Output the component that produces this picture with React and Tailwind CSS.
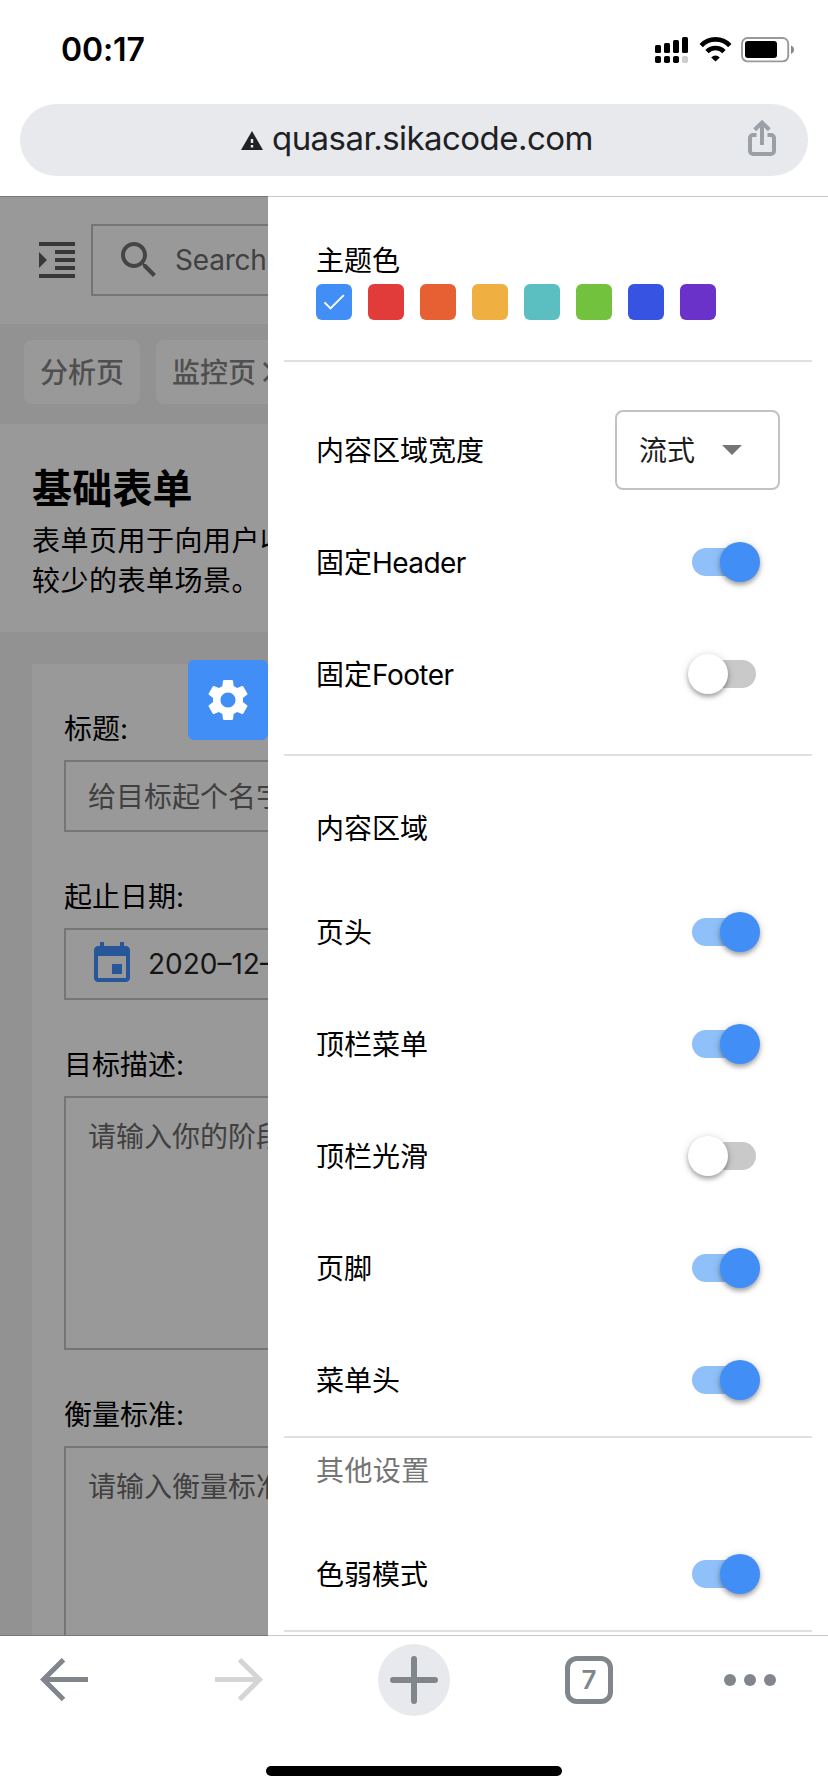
const SWATCHES = [
  'bg-[#428ef7]', 'bg-[#e13c39]', 'bg-[#e66033]', 'bg-[#efaf41]',
  'bg-[#5bbfc1]', 'bg-[#73c23d]', 'bg-[#3653e2]', 'bg-[#6a32c9]',
];

function StatusBar() {
  return (
    <div className="flex h-[104px] shrink-0 justify-between pl-[61px] pr-[34px]">
      <div className="pt-[30px] text-[32px] leading-[40px] font-semibold tracking-[-0.1px] text-black">00:17</div>
      <svg className="mt-[37px] h-[27px] w-[140px]" viewBox="0 0 140 27">
        <rect x="1" y="8" width="6" height="8" rx="1.5" />
        <rect x="10" y="6" width="6" height="10" rx="1.5" />
        <rect x="19" y="3" width="6" height="13" rx="1.5" />
        <rect x="28" y="0" width="6" height="16" rx="1.5" />
        <rect x="1" y="19" width="6" height="7" rx="1.8" />
        <rect x="10" y="19" width="6" height="7" rx="1.8" />
        <rect x="19" y="19" width="6" height="7" rx="1.8" />
        <rect x="28" y="19" width="6" height="7" rx="1.8" fill="#ccc" />
        <path d="M47.2 8.6a19.6 19.6 0 0 1 28.6 0M53 14.6a12 12 0 0 1 17 0" fill="none" stroke="#000" strokeWidth="4.6" />
        <path d="M57.2 20.4a6 6 0 0 1 8.6 0L61.5 24.4z" />
        <rect x="88" y="1" width="46.2" height="23.4" rx="5.5" fill="none" stroke="#999" strokeWidth="1.9" />
        <rect x="91" y="4" width="32" height="17" rx="3" />
        <path d="M137 8.5c1.8.6 3 2.200 3 4.200s-1.200 3.600-3 4.200z" fill="#888" />
      </svg>
    </div>
  );
}

function UrlBar() {
  return (
    <div className="mx-5 flex h-[72px] shrink-0 items-center rounded-full bg-[#e8e9ed] pl-[221px] pr-8">
      <svg className="mt-[1px] h-[19px] w-[22px]" viewBox="0 0 22 19">
        <path d="M11 0l11 19H0z" fill="#202124" />
        <path d="M9.800 8h2.400v4H9.800zM9.800 14h2.400v2.400H9.800z" fill="#e8e9ed" />
      </svg>
      <div className="ml-[9px] flex-1 pb-[4px] text-[33px] leading-[40px] tracking-[-0.55px] whitespace-nowrap text-[#202124]">quasar.sikacode.com</div>
      <svg className="mb-[5px] h-[36px] w-[28px]" viewBox="0 0 28 36" fill="none" stroke="#9aa0a6" strokeWidth="4">
        <path d="M8.500 15H5a3 3 0 0 0-3 3V31a3 3 0 0 0 3 3h18a3 3 0 0 0 3-3V18a3 3 0 0 0-3-3h-3.500" />
        <path d="M14 25V3M6.700 9.700L14 2.600l7.300 7.100" />
      </svg>
    </div>
  );
}

function MaterialIcon({ d, className }) {
  return <svg className={className} viewBox="0 0 24 24" fill="currentColor"><path d={d} /></svg>;
}

function Field({ label, children, tall }) {
  return (
    <div className="shrink-0">
      <div className="flex h-24 items-center pt-[34px] text-[28px]">{label}</div>
      <div className={`flex w-[400px] border-2 border-[#757575] text-[28px] text-[#404040] ${tall ? 'h-[254px] items-start pl-[22px] pt-[19px] leading-[40px]' : 'h-[72px] items-center pl-[22px] pt-[2px]'}`}>
        {children}
      </div>
    </div>
  );
}

function DimmedPage() {
  return (
    <div className="flex w-[268px] shrink-0 flex-col overflow-hidden bg-[#929292] whitespace-nowrap">
      <div className="flex h-[127px] shrink-0 items-center bg-[#999] pl-[33px] pb-[1px]">
        <MaterialIcon className="size-12 shrink-0 text-[#373737]" d="M3 21h18v-2H3v2zM3 8v8l4-4-4-4zm8 9h10v-2H11v2zM3 3v2h18V3H3zm8 6h10V7H11v2zm0 4h10v-2H11v2z" />
        <div className="ml-[10px] flex h-[72px] w-[400px] shrink-0 items-center border-2 border-[#757575] pl-[22px]">
          <MaterialIcon className="size-12 shrink-0 text-[#454545]" d="M15.500 14h-.79l-.28-.27C15.410 12.590 16 11.110 16 9.500 16 5.910 13.090 3 9.500 3S3 5.910 3 9.500 5.910 16 9.500 16c1.610 0 3.090-.59 4.230-1.570l.27.28v.79l5 4.990L20.490 19l-4.990-5zm-6 0C7.010 14 5 11.990 5 9.500S7.010 5 9.500 5 14 7.010 14 9.500 11.990 14 9.500 14z" />
          <span className="ml-[12px] text-[28px] tracking-[-0.2px] text-[#404040]">Search</span>
        </div>
      </div>
      <div className="flex h-[100px] shrink-0 items-start gap-4 pt-4 pl-6 text-[28px] font-medium text-[#4f4f4f]">
        <div className="flex h-16 w-[116px] shrink-0 items-center rounded-lg bg-[#999] pt-[2px] pl-4">分析页</div>
        <div className="flex h-16 w-[150px] shrink-0 items-center rounded-lg bg-[#999] pt-[2px] pl-4">
          监控页
          <svg className="mb-[2px] ml-[7px] size-5" viewBox="0 0 20 20" stroke="#4f4f4f" strokeWidth="3"><path d="M1 1l18 18M19 1L1 19" /></svg>
        </div>
      </div>
      <div className="h-[208px] shrink-0 bg-[#999] pt-[41px] pl-8 text-black">
        <div className="h-[56px] text-[40px] leading-[48px] font-bold tracking-[0.2px]">基础表单</div>
        <div className="text-[28px] leading-[40px] tracking-[0.5px]">表单页用于向用户收</div>
        <div className="text-[28px] leading-[40px] tracking-[0.5px]">较少的表单场景。</div>
      </div>
      <div className="mt-8 ml-8 flex min-h-0 flex-1 flex-col overflow-hidden bg-[#999] pl-8 text-black">
        <Field label="标题:">给目标起个名字</Field>
        <Field label="起止日期:">
          <MaterialIcon className="mb-[2px] size-12 shrink-0 text-[#285799]" d="M17 12h-5v5h5v-5zM16 1v2H8V1H6v2H5c-1.110 0-1.990.9-1.990 2L3 19c0 1.100.89 2 2 2h14c1.100 0 2-.9 2-2V5c0-1.100-.9-2-2-2h-1V1h-2zm3 18H5V8h14v11z" />
          <span className="ml-[12px] pb-[2px] text-[#141414]">2020–12–</span>
        </Field>
        <Field label="目标描述:" tall>请输入你的阶段</Field>
        <Field label="衡量标准:" tall>请输入衡量标准</Field>
      </div>
    </div>
  );
}

function Toggle({ on }) {
  return (
    <div className={`relative mr-[24px] h-[28px] w-[64px] rounded-full ${on ? 'bg-[#90c0f9]' : 'bg-[#c9c9c9]'}`}>
      <div className={`absolute -top-[6px] size-10 rounded-full shadow-[0_3px_4px_rgba(0,0,0,0.28),0_1px_8px_rgba(0,0,0,0.16)] ${on ? '-right-[4px] bg-[#428ef7]' : '-left-[4px] bg-white'}`} />
    </div>
  );
}

function Row({ label, latin, children }) {
  return (
    <div className="flex h-28 shrink-0 items-center justify-between pr-12 pl-[48px] text-[28px]">
      <span className="pt-[2px]">
        {label}
        {latin && <span className="tracking-[-0.55px]">{latin}</span>}
      </span>
      {children}
    </div>
  );
}

function Divider() {
  return <div className="mx-4 h-[2px] shrink-0 bg-[#e0e0e0]" />;
}

function Drawer() {
  return (
    <div className="flex flex-1 flex-col bg-white text-black">
      <div className="h-[163px] shrink-0 pt-[50px] pl-[48px]">
        <div className="text-[28px] leading-[28px]">主题色</div>
        <div className="mt-[9px] flex gap-4">
          {SWATCHES.map((color, i) => (
            <div key={color} className={`flex size-9 items-center justify-center rounded-[6px] ${color}`}>
              {i === 0 && (
                <svg className="h-[18px] w-[22px]" viewBox="0 0 22 18" fill="none" stroke="#fff" strokeWidth="2">
                  <path d="M1.500 9.400l6 6L20.800 2.100" />
                </svg>
              )}
            </div>
          ))}
        </div>
      </div>
      <Divider />
      <div className="h-[392px] shrink-0 pt-8">
        <Row label="内容区域宽度">
          <div className="flex h-20 w-[165px] items-center rounded-lg border-2 border-[#c2c2c2] pl-[22px] text-[#1d1d1d]">
            <span className="pt-[2px]">流式</span>
            <svg className="ml-[27px] h-[10px] w-5" viewBox="0 0 20 10"><path d="M0 0h20L10 10z" fill="#757575" /></svg>
          </div>
        </Row>
        <Row label="固定" latin="Header"><Toggle on /></Row>
        <Row label="固定" latin="Footer"><Toggle /></Row>
      </div>
      <Divider />
      <div className="flex h-[120px] shrink-0 items-center pt-[26px] pl-[48px] text-[28px]">内容区域</div>
      <Row label="页头"><Toggle on /></Row>
      <Row label="顶栏菜单"><Toggle on /></Row>
      <Row label="顶栏光滑"><Toggle /></Row>
      <Row label="页脚"><Toggle on /></Row>
      <Row label="菜单头"><Toggle on /></Row>
      <Divider />
      <div className="mb-4 flex h-16 shrink-0 items-center pt-[2px] pl-[48px] text-[28px] tracking-[0.4px] text-[#757575]">其他设置</div>
      <Row label="色弱模式"><Toggle on /></Row>
      <Divider />
    </div>
  );
}

function BottomBar() {
  return (
    <div className="flex h-[156px] shrink-0 flex-col items-center justify-between bg-white pt-2 pb-4">
      <div className="flex h-[72px] w-full items-center pl-10 text-[#80868b]">
        <svg className="h-[44px] w-[48px]" viewBox="0 0 48 44" fill="none" stroke="#80868b" strokeWidth="5">
          <path d="M48 21.500H4M23.500 1.700L3.500 21.500l20 20" />
        </svg>
        <svg className="ml-[127px] h-[44px] w-[48px]" viewBox="0 0 48 44" fill="none" stroke="#d5d5d5" strokeWidth="5">
          <path d="M0 21.500H44M24.500 1.700l20 19.800-20 20" />
        </svg>
        <div className="ml-[115px] flex size-[72px] items-center justify-center rounded-full bg-[#e8e9ed]">
          <svg className="size-12" viewBox="0 0 48 48" stroke="#80868b" strokeWidth="6" strokeLinecap="round"><path d="M24 3v42M3 24h42" /></svg>
        </div>
        <div className="ml-[115px] flex size-12 items-center justify-center rounded-[12px] border-[5px] border-[#80868b] text-[26px] leading-none font-semibold">7</div>
        <div className="ml-[111px] flex gap-2">
          <div className="size-3 rounded-full bg-[#80868b]" />
          <div className="size-3 rounded-full bg-[#80868b]" />
          <div className="size-3 rounded-full bg-[#80868b]" />
        </div>
      </div>
      <div className="h-[10px] w-[296px] rounded-full bg-black" />
    </div>
  );
}

function Edge() {
  return (
    <div className="flex h-px shrink-0">
      <div className="w-[268px] bg-[#787878]" />
      <div className="flex-1 bg-[#c9c9c9]" />
    </div>
  );
}

export default function App() {
  return (
    <div className="flex h-[1792px] w-[828px] flex-col overflow-hidden bg-white font-['Inter','Noto_Sans_CJK_SC',sans-serif]">
      <StatusBar />
      <UrlBar />
      <div className="h-5 shrink-0" />
      <Edge />
      <div className="relative flex h-[1438px] shrink-0">
        <DimmedPage />
        <Drawer />
        <div className="absolute top-[463px] left-[188px] flex size-20 items-center justify-center rounded-[6px] bg-[#428ef7]">
          <MaterialIcon className="size-[50px] text-white" d="M19.140 12.940c.04-.3.06-.61.06-.94 0-.32-.02-.64-.07-.94l2.030-1.580c.18-.14.23-.41.12-.61l-1.920-3.320c-.12-.22-.37-.29-.59-.22l-2.390.96c-.5-.38-1.030-.7-1.620-.94l-.36-2.540c-.04-.24-.24-.41-.48-.41h-3.840c-.24 0-.43.17-.47.41l-.36 2.540c-.59.24-1.130.57-1.620.94l-2.390-.96c-.22-.08-.47 0-.59.22L2.740 8.870c-.12.21-.08.47.12.61l2.030 1.580c-.05.3-.09.63-.09.94s.02.64.07.94l-2.030 1.580c-.18.14-.23.41-.12.61l1.920 3.320c.12.22.37.29.59.22l2.390-.96c.5.38 1.030.7 1.620.94l.36 2.540c.05.24.24.41.48.41h3.840c.24 0 .44-.17.47-.41l.36-2.540c.59-.24 1.130-.56 1.620-.94l2.390.96c.22.08.47 0 .59-.22l1.920-3.320c.12-.22.07-.47-.12-.61l-2.010-1.580zM12 15.600c-1.980 0-3.600-1.620-3.600-3.600s1.620-3.600 3.600-3.600 3.600 1.620 3.600 3.600-1.620 3.600-3.600 3.600z" />
        </div>
      </div>
      <Edge />
      <BottomBar />
    </div>
  );
}
